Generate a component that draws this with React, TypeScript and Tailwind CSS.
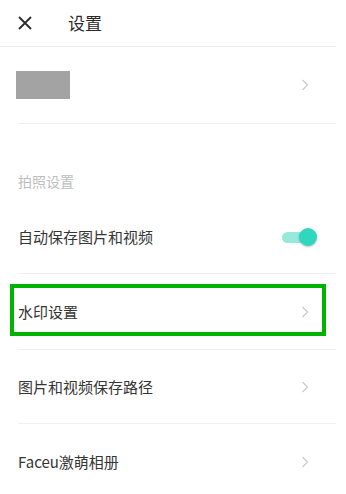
import React from 'react';

const font = { fontFamily: '"Noto Sans CJK SC", "Noto Sans", sans-serif' };

const Chevron: React.FC = () => (
  <svg width="8" height="12" viewBox="0 0 8 12" className="shrink-0">
    <path d="M1.5 1 L6.5 6 L1.5 11" fill="none" stroke="#c9c9c9" strokeWidth="1.2" />
  </svg>
);

const Toggle: React.FC = () => (
  <div className="relative w-[35px] h-[18px]">
    <div className="absolute left-0 top-[4px] w-[30px] h-[11px] rounded-full bg-[#97e9db]" />
    <div className="absolute right-0 top-0 w-[18px] h-[18px] rounded-full bg-[#2fd7bf] shadow-[0_1px_2px_rgba(0,0,0,0.25)]" />
  </div>
);

interface RowProps {
  label: string;
  height: string;
  border?: boolean;
  children?: React.ReactNode;
}

const Row: React.FC<RowProps> = ({ label, height, border = true, children }) => (
  <div className={`relative ml-[18px] flex items-center justify-between pr-[27px] ${height} ${border ? 'border-b border-[#f0f0f0]' : ''}`}>
    <span className="text-[15px] text-[#353535] leading-[20px]">{label}</span>
    {children ?? <Chevron />}
  </div>
);

export default function App() {
  return (
    <div className="w-[336px] bg-white min-h-[494px]" style={font}>
      {/* header */}
      <div className="h-[47px] flex items-center border-b border-[#eeeeee]">
        <svg width="14" height="14" viewBox="0 0 14 14" className="ml-[18px]">
          <path d="M1 1 L13 13 M13 1 L1 13" stroke="#2a2a2a" strokeWidth="1.8" />
        </svg>
        <span className="ml-[36px] text-[17px] text-[#2a2a2a] leading-[24px]">设置</span>
      </div>

      {/* profile */}
      <div className="ml-[18px] h-[77px] flex items-center justify-between pr-[27px] border-b border-[#f0f0f0]">
        <div className="-ml-[2px] w-[54px] h-[28px] bg-[#a3a3a3]" />
        <Chevron />
      </div>

      {/* section label */}
      <div className="h-[76px] flex items-end pb-[9px] pl-[18px]">
        <span className="text-[14px] text-[#bdbdbd] leading-[20px]">拍照设置</span>
      </div>

      <div className="ml-[18px] h-[74px] flex items-center justify-between pr-[19px] border-b border-[#f0f0f0]">
        <span className="text-[15px] text-[#353535] leading-[20px]">自动保存图片和视频</span>
        <Toggle />
      </div>

      <Row label="水印设置" height="h-[76px]">
        <Chevron />
        <div className="absolute -left-[8px] top-[10px] w-[316px] h-[52px] border-[4px] border-[#00b300]" />
      </Row>

      <Row label="图片和视频保存路径" height="h-[74px]" />
      <Row label="Faceu激萌相册" height="h-[75px]" border={false} />
    </div>
  );
}
